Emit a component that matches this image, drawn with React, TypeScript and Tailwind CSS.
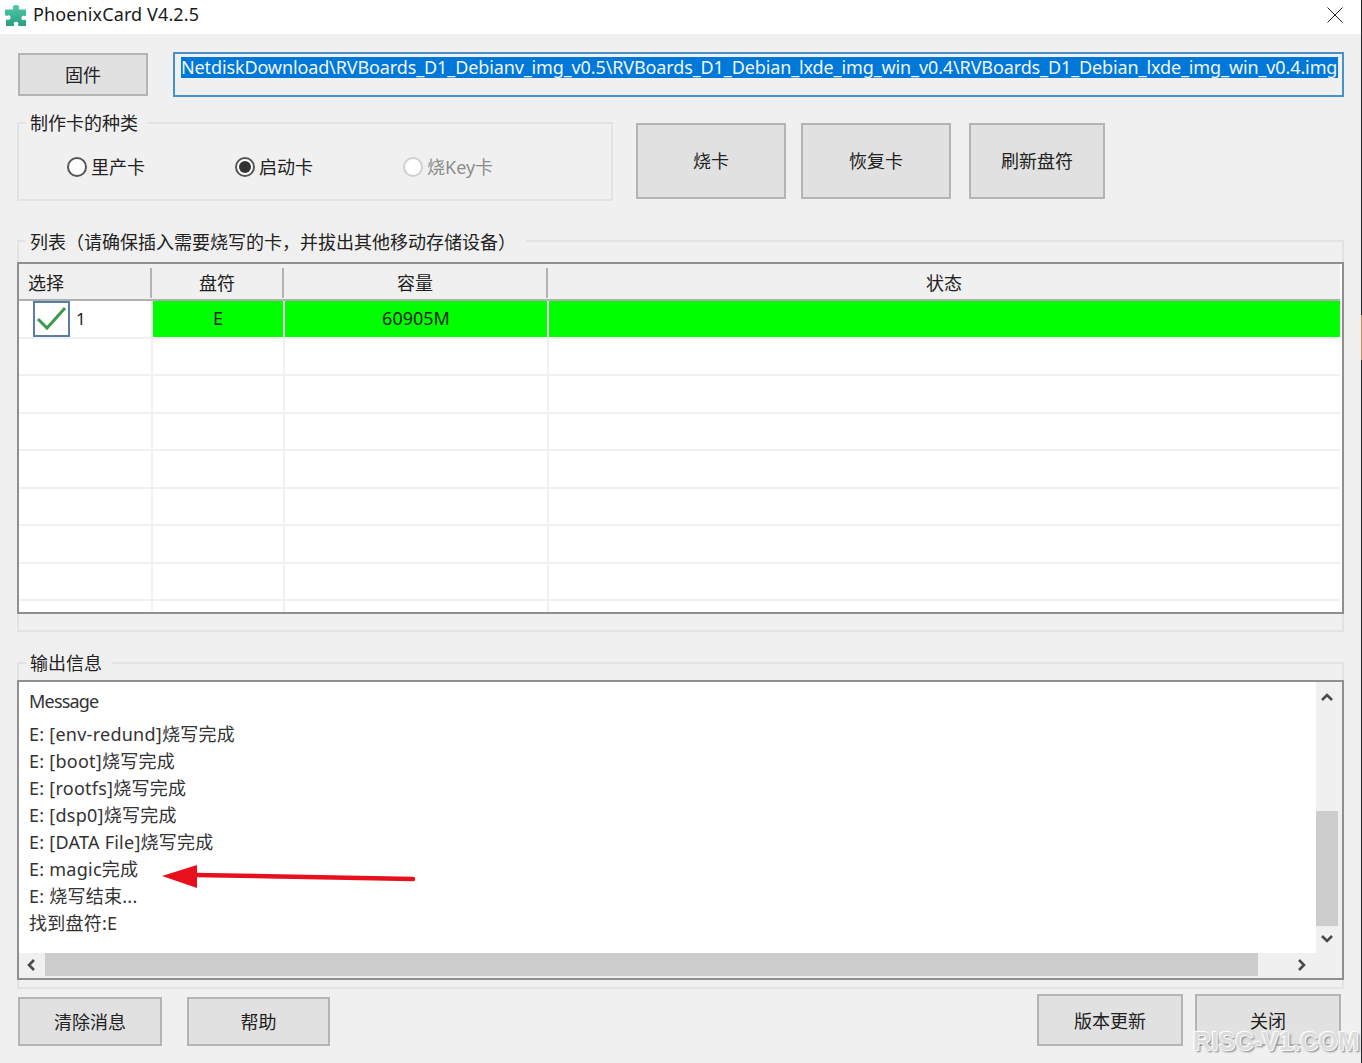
const sans = '"Noto Sans", "Noto Sans CJK SC", sans-serif'

function Btn({ label, className }: { label: string; className: string }) {
  return (
    <div className={`flex shrink-0 items-center justify-center border-2 border-[#b4b4b4] bg-[#e1e1e1] text-[18px] text-[#222] ${className}`}>
      {label}
    </div>
  )
}

function Radio({ label, checked, disabled, className }: { label: string; checked?: boolean; disabled?: boolean; className: string }) {
  return (
    <div className={`flex items-center ${className}`}>
      <span className={`flex h-[20px] w-[20px] shrink-0 items-center justify-center rounded-full border-2 bg-white ${disabled ? 'border-[#cfcfcf]' : 'border-[#555]'}`}>
        {checked && <span className="h-[12px] w-[12px] rounded-full bg-[#333]" />}
      </span>
      <span className={`ml-[4px] mt-[2px] text-[18px] ${disabled ? 'text-[#8c8c8c]' : 'text-[#222]'}`}>{label}</span>
    </div>
  )
}

function Legend({ label, className }: { label: string; className: string }) {
  return <span className={`absolute left-[7px] whitespace-nowrap bg-[#f0f0f0] pl-[4px] pr-[10px] text-[18px] leading-[22px] text-[#222] ${className}`}>{label}</span>
}

const rows = [0, 1, 2, 3, 4, 5, 6, 7, 8]

function ListTable() {
  return (
    <div className="h-[352px] overflow-hidden border-2 border-[#8f8f8f] bg-white pr-[2px] text-[18px] text-[#222]">
      <div className="flex h-[37px] border-b-2 border-[#b0b0b0] bg-[#f0f0f0] pt-[3px]">
        <div className="flex w-[131px] items-center pl-[9px]">选择</div>
        <div className="my-[1px] w-[2px] bg-[#b4b4b4]" />
        <div className="flex w-[130px] items-center justify-center">盘符</div>
        <div className="my-[1px] w-[2px] bg-[#b4b4b4]" />
        <div className="flex w-[262px] items-center justify-center">容量</div>
        <div className="my-[1px] w-[2px] bg-[#b4b4b4]" />
        <div className="flex flex-1 items-center justify-center">状态</div>
      </div>
      {rows.map((r) => (
        <div key={r} className="flex h-[37.5px] border-b-2 border-[#f0f0f0]">
          <div className="flex w-[134px] items-center border-r-2 border-[#f0f0f0] pl-[14px]">
            {r === 0 && (
              <>
                <span className="flex h-[36px] w-[37px] shrink-0 items-center justify-center border-2 border-[#5a7ea6] bg-white">
                  <svg width="31" height="27" viewBox="0 0 31 27" fill="none">
                    <path d="M2 14l9 9L29 3" stroke="#3d9a4a" strokeWidth="3" />
                  </svg>
                </span>
                <span className="ml-[6px] text-[17px]">1</span>
              </>
            )}
          </div>
          <div className={`flex w-[132px] items-center justify-center border-r-2 border-[#f0f0f0] ${r === 0 ? 'bg-[#00ff00]' : ''}`}>{r === 0 ? 'E' : ''}</div>
          <div className={`flex w-[264px] items-center justify-center border-r-2 border-[#f0f0f0] ${r === 0 ? 'bg-[#00ff00]' : ''}`}>{r === 0 ? '60905M' : ''}</div>
          <div className={`flex-1 ${r === 0 ? 'bg-[#00ff00]' : ''}`} />
        </div>
      ))}
    </div>
  )
}

const messages = ['E: [env-redund]烧写完成', 'E: [boot]烧写完成', 'E: [rootfs]烧写完成', 'E: [dsp0]烧写完成', 'E: [DATA File]烧写完成', 'E: magic完成', 'E: 烧写结束...', '找到盘符:E']

function Chevron({ d }: { d: string }) {
  return (
    <svg width="14" height="14" viewBox="0 0 14 14" fill="none">
      <path d={d} stroke="#4a4a4a" strokeWidth="2.6" />
    </svg>
  )
}

function MessageBox() {
  return (
    <div className="relative flex h-[300px] flex-col border-2 border-[#8f8f8f] bg-white text-[18px] text-[#333]">
      <div className="flex min-h-0 flex-1">
        <div className="flex-1 pl-[10px] pt-[6px]">
          <div className="h-[33px] leading-[26px] tracking-[-0.8px]">Message</div>
          {messages.map((m) => (
            <div key={m} className="h-[27px] leading-[27px] tracking-[0.25px]">{m}</div>
          ))}
        </div>
        <div className="flex w-[22px] flex-col items-center bg-[#f0f0f0]">
          <div className="flex h-[26px] w-full items-center justify-center pt-[3px]"><Chevron d="M2 10l5-5 5 5" /></div>
          <div className="mt-[103px] h-[115px] w-full bg-[#cdcdcd]" />
          <div className="flex h-[26px] w-full items-center justify-center"><Chevron d="M2 4l5 5 5-5" /></div>
        </div>
        <div className="w-[4px] bg-[#f0f0f0]" />
      </div>
      <div className="flex h-[25px] items-stretch bg-[#f0f0f0] pb-[2px]">
        <div className="flex w-[26px] items-center justify-center"><Chevron d="M9 2L4 7l5 5" /></div>
        <div className="w-[1213px] bg-[#cdcdcd]" />
        <div className="flex w-[62px] items-center justify-center pl-[24px]"><Chevron d="M5 2l5 5-5 5" /></div>
      </div>
    </div>
  )
}

export default function App() {
  return (
    <div className="relative h-[1063px] w-[1362px] overflow-hidden bg-[#f0f0f0]" style={{ fontFamily: sans }}>
      {/* title bar */}
      <div className="flex h-[34px] items-center bg-white pl-[5px] pr-[19px]">
        <svg width="23" height="23" viewBox="0 0 23 23" className="mb-[6px] shrink-0">
          <defs>
            <linearGradient id="piece" x1="0" y1="0" x2="0" y2="1">
              <stop offset="0" stopColor="#4fcaa9" />
              <stop offset="1" stopColor="#2a9e84" />
            </linearGradient>
          </defs>
          <path d="M8 5C6.500 1 15.500 1 14 5c-.3 1 0 1.500 1 1.500h6v5.500c0 1-1 1.200-2 .8-3.500-1.300-3.500 5.500 0 4.200 1-.4 2-.2 2 .8V23H14c-1 0-1.200-1-.8-2 1.200-3-5.400-3-4.200 0 .4 1 .2 2-.8 2H1v-5.500c0-1 1-1.200 2-.8 3.500 1.300 3.500-5.500 0-4.200-1 .4-3 .2-3-.8V6.500h7c1 0 1.300-.5 1-1.500z" fill="url(#piece)" />
        </svg>
        <span className="ml-[5px] mb-[6px] text-[18px] tracking-[0.12px] text-[#1a1a1a]">PhoenixCard V4.2.5</span>
        <svg width="16" height="16" viewBox="0 0 16 16" className="mb-[5px] ml-auto" fill="none">
          <path d="M0.5 0.5l15 15M15.500 0.5l-15 15" stroke="#222" strokeWidth="1" />
        </svg>
      </div>

      <div className="pl-[17px] pr-[18px]">
        {/* firmware row */}
        <div className="flex pt-[18px]">
          <Btn label="固件" className="ml-[1px] mt-[1px] h-[43px] w-[130px] pt-[2px]" />
          <div className="ml-[25px] h-[45px] w-[1172px] overflow-hidden border-2 border-[#4a90c8] bg-[#f0f0f0] pl-[6px] pt-[3px]">
            <div className="h-[21px] w-[1157px] overflow-hidden whitespace-nowrap bg-[#0078d7] text-[18px] leading-[21px] tracking-[-0.12px] text-[#f0f6fb]">
              NetdiskDownload\RVBoards_D1_Debianv_img_v0.5\RVBoards_D1_Debian_lxde_img_win_v0.4\RVBoards_D1_Debian_lxde_img_win_v0.4.img
            </div>
          </div>
        </div>

        {/* card type + actions */}
        <div className="mt-[25px] flex">
          <div className="relative flex h-[79px] w-[596px] items-center border-2 border-[#e3e3e3] pl-[48px] pt-[10px]">
            <Legend label="制作卡的种类" className="top-[-12px]" />
            <Radio label="里产卡" className="w-[168px]" />
            <Radio label="启动卡" checked className="w-[168px]" />
            <Radio label="烧Key卡" disabled className="" />
          </div>
          <Btn label="烧卡" className="ml-[23px] mt-[1px] h-[76px] w-[150px]" />
          <Btn label="恢复卡" className="ml-[15px] mt-[1px] h-[76px] w-[150px]" />
          <Btn label="刷新盘符" className="ml-[18px] mt-[1px] h-[76px] w-[136px]" />
        </div>

        {/* list group */}
        <div className="relative mt-[39px] h-[392px] border-2 border-[#e3e3e3] pt-[20px]">
          <Legend label="列表（请确保插入需要烧写的卡，并拔出其他移动存储设备）" className="top-[-11px]" />
          <div className="mx-[-2px]"><ListTable /></div>
        </div>

        {/* output group */}
        <div className="relative mt-[30px] h-[327px] border-2 border-[#e3e3e3] pt-[16px]">
          <Legend label="输出信息" className="top-[-12px]" />
          <div className="mx-[-2px]"><MessageBox /></div>
        </div>

        {/* bottom buttons */}
        <div className="mt-[8px] flex">
          <Btn label="清除消息" className="ml-[1px] h-[49px] w-[144px] pt-[2px]" />
          <Btn label="帮助" className="ml-[25px] h-[49px] w-[143px] pt-[2px]" />
          <Btn label="版本更新" className="ml-auto mt-[-3px] h-[52px] w-[146px] pt-[2px]" />
          <Btn label="关闭" className="ml-[12px] mr-[3px] mt-[-3px] h-[52px] w-[146px] pt-[2px]" />
        </div>
      </div>

      {/* red annotation arrow over the log */}
      <svg width="258" height="30" viewBox="0 0 258 30" className="absolute left-[160px] top-[862px]" fill="none">
        <path d="M35 13L253 17" stroke="#e8101c" strokeWidth="4.500" strokeLinecap="round" />
        <path d="M2 14L37 3v23z" fill="#e8101c" />
      </svg>

      {/* watermark */}
      <span className="absolute left-[1193px] top-[1026px] text-[25px] font-bold leading-[30px] tracking-[0.2px] text-[#dcdcdc] [text-shadow:0_0_2px_#fff,0_0_2px_#fff,1px_1px_1px_#fff,-1px_-1px_1px_#fff,2px_2px_2px_#777]" style={{ fontFamily: '"Liberation Sans", sans-serif' }}>
        RISC-V1.COM
      </span>

      {/* edge of the neighbouring window */}
      <div className="absolute right-0 top-0 h-full w-[1px] bg-[#20242c]" />
      <div className="absolute right-0 top-[315px] h-[45px] w-[1px] bg-[#d98a5a]" />
    </div>
  )
}
